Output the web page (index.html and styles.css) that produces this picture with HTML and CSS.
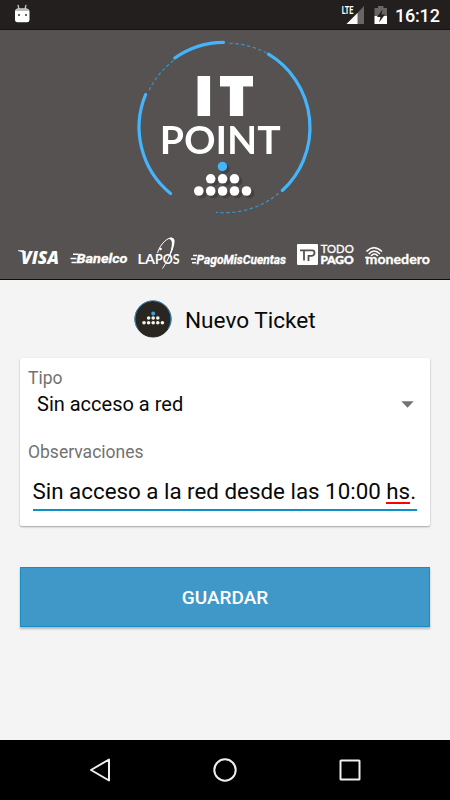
FILE: index.html
```html
<!DOCTYPE html>
<html lang="es">
<head>
<meta charset="utf-8">
<title>Nuevo Ticket</title>
<link rel="stylesheet" href="styles.css">
</head>
<body>
<header class="status">
  <svg class="droid" width="16" height="20" viewBox="0 0 16 20"><path d="M4 .800 5.200 6M12 .800 10.800 6" stroke="#bbb" stroke-width="1.400"/><path d="M1 8Q1 4.500 4 4.500H12Q15.500 4.500 15.500 8V16Q15.500 18.300 13 18.300H3.500Q1 18.300 1 16Z" fill="#fff"/><path d="M1.500 7Q2 4.500 4 4.500H12Q14.500 4.500 15 7Z" fill="#bbb"/><path d="M4 10h2v2H4zM11 10h2v2h-2z" fill="#666"/></svg>
  <svg class="signal" width="24" height="20" viewBox="341 5 24 20"><path d="M347 24 364 6V24Z" fill="#686564"/><path d="M340.500 4H354.500V15.500L347 20H340.500Z" fill="#221f1e"/><path d="M346.500 24 357.500 13V24Z" fill="#fff"/><text x="341.700" y="14" class="lte" textLength="11.800" lengthAdjust="spacingAndGlyphs">LTE</text></svg>
  <svg class="battery" width="14" height="20" viewBox="374 5 14 20"><path d="M374.500 8H378V6H383.500V8H387V16H374.500Z" fill="#686564"/><path d="M374.500 16H387V24H374.500Z" fill="#fff"/><path d="M382.500 9.500 377 17H380.500L379 22.500 385 14.500H381.500Z" fill="#221f1e"/></svg>
  <time class="clock">16:12</time>
</header>
<section class="hero">
  <svg class="logo" width="190" height="190" viewBox="130 30 190 190">
    <g fill="none" stroke="#45b5fb" stroke-width="3.200" stroke-linecap="round">
      <path d="M223.500 42.300A85.500 85.500 0 0 0 174.800 58"/>
      <path d="M145.600 94.600A85.500 85.500 0 0 0 170.500 193.500"/>
      <path d="M268.500 54.200A85.500 85.500 0 0 1 282.300 190.500"/>
    </g>
    <g fill="none" stroke="#3b93c8" stroke-width="1.200" stroke-dasharray="3.400 2.500">
      <path d="M173.500 60.500A85 85 0 0 0 149 90.500"/>
      <path d="M229.500 43.300A85 85 0 0 1 267.500 53.500"/>
      <path d="M278.500 193.500A85 85 0 0 1 216 212.300"/>
    </g>
    <g class="it"><text x="194.400" y="114.700">I</text><text x="219.700" y="114.700" textLength="33.500" lengthAdjust="spacingAndGlyphs">T</text></g>
    <text class="point" x="159.700" y="154.300" textLength="121" lengthAdjust="spacingAndGlyphs">POINT</text>
    <g fill="#454140"><circle cx="225" cy="169" r="4.700"/><circle cx="213.500" cy="181" r="4.900"/><circle cx="225.500" cy="181" r="4.900"/><circle cx="237.500" cy="181" r="4.900"/><circle cx="201.500" cy="193.500" r="4.900"/><circle cx="213.500" cy="193.500" r="4.900"/><circle cx="225.500" cy="193.500" r="4.900"/><circle cx="237.500" cy="193.500" r="4.900"/><circle cx="249.500" cy="193.500" r="4.900"/></g>
    <circle cx="222.400" cy="166.500" r="4.700" fill="#45b5fb"/>
    <g fill="#fff"><circle cx="210.700" cy="178.800" r="4.800"/><circle cx="222.600" cy="178.800" r="4.800"/><circle cx="234.500" cy="178.800" r="4.800"/><circle cx="198.800" cy="191" r="4.800"/><circle cx="210.700" cy="191" r="4.800"/><circle cx="222.600" cy="191" r="4.800"/><circle cx="234.500" cy="191" r="4.800"/><circle cx="246.500" cy="191" r="4.800"/></g>
  </svg>
  <div class="partners">
    <svg width="65" height="50" viewBox="0 230 65 50"><path d="M18 250.300H24L25.500 254Q22 251.500 18 251Z" fill="#fff"/><text class="visa" x="21" y="263.500" textLength="38" lengthAdjust="spacingAndGlyphs">VISA</text></svg>
    <svg width="68" height="50" viewBox="65 230 68 50"><path d="M73 254.200h5M70.500 258.500h6M71.500 262.500h5" stroke="#fff" stroke-width="1.500"/><text class="brand" x="76.500" y="263.300" textLength="51" lengthAdjust="spacingAndGlyphs">Banelco</text></svg>
    <svg width="52" height="50" viewBox="133 230 52 50"><text class="lapos" y="263.500"><tspan x="137.500" textLength="17.500" lengthAdjust="spacingAndGlyphs">LA</tspan><tspan x="155" textLength="24.500" lengthAdjust="spacingAndGlyphs">POS</tspan></text><path d="M157.500 253C160 244 168 237 172 238C176 240 171 256 162.500 268.500" fill="none" stroke="#fff" stroke-width="1"/><path d="M168 239Q173 236 174.500 240Q175 248 167 261Q172.500 248 171.800 242Q171 238.500 168 239Z" fill="#fff"/><circle cx="160.500" cy="249" r="1.300" fill="#fff"/></svg>
    <svg width="105" height="50" viewBox="185 230 105 50"><path d="M193 255.500h4M191 259h5M192 262.700h4" stroke="#fff" stroke-width="1.400"/><text class="brand pago" x="196.500" y="263.500" textLength="89.500" lengthAdjust="spacingAndGlyphs">PagoMisCuentas</text></svg>
    <svg width="70" height="50" viewBox="290 230 70 50"><rect x="297" y="244" width="21" height="21" rx="1" fill="#fff"/><path d="M300 250.300H312.500Q314.500 250.300 314.500 252.800T312 255.800H308.500V261M304 251V260.500" fill="none" stroke="#565251" stroke-width="1.800"/><text class="todo" x="320.700" y="253.200" textLength="33" lengthAdjust="spacingAndGlyphs">TODO</text><text class="pagob" x="320.500" y="264" textLength="33" lengthAdjust="spacingAndGlyphs">PAGO</text></svg>
    <svg width="90" height="50" viewBox="360 230 90 50"><g fill="none" stroke="#fff" stroke-width="1.500"><path d="M366.500 251.500Q374 244 382 251.500"/><path d="M368.700 254Q374 248 380 254"/><path d="M371 256Q374.300 252 378 256"/></g><path d="M365 257.500H369" stroke="#fff" stroke-width="1.500"/><text class="mone" x="365.500" y="263.500" textLength="64.500" lengthAdjust="spacingAndGlyphs">monedero</text></svg>
  </div>
</section>
<main class="content">
  <div class="heading">
    <svg width="38" height="38" viewBox="0 0 38 38"><circle cx="19" cy="19" r="18" fill="#292622" stroke="#292622"/><path d="M4.200 29.500A18.200 18.200 0 0 1 17 1M20 .900A18.200 18.200 0 0 1 34 29" fill="none" stroke="#2b91c8" stroke-width="1"/><circle cx="19.200" cy="13.500" r="1.900" fill="#3ba4e4"/><g fill="#f5f5ed"><circle cx="14.600" cy="18" r="1.800"/><circle cx="19.200" cy="18" r="1.800"/><circle cx="23.800" cy="18" r="1.800"/><circle cx="10" cy="22.700" r="1.800"/><circle cx="14.600" cy="22.700" r="1.800"/><circle cx="19.200" cy="22.700" r="1.800"/><circle cx="23.800" cy="22.700" r="1.800"/><circle cx="28.400" cy="22.700" r="1.800"/></g></svg>
    <h1>Nuevo Ticket</h1>
  </div>
  <section class="card">
    <div class="label">Tipo</div>
    <div class="select"><span>Sin acceso a red</span><svg width="13" height="7" viewBox="0 0 13 7"><path d="M.300 .300H12.700L6.500 6.700Z" fill="#737373"/></svg></div>
    <div class="label obs">Observaciones</div>
    <div class="input">Sin acceso a la red desde las 10:00 <span class="typo">hs</span>.</div>
  </section>
  <button class="save">GUARDAR</button>
</main>
<nav class="nav">
  <svg width="24" height="28" viewBox="0 0 24 28"><path d="M21 3.500V24.500L3 14Z" class="nav-icon"/></svg>
  <svg width="26" height="28" viewBox="0 0 26 28"><circle cx="13" cy="14" r="10.700" class="nav-icon"/></svg>
  <svg width="24" height="28" viewBox="0 0 24 28"><rect x="2.500" y="4.500" width="19" height="19" rx=".5" class="nav-icon"/></svg>
</nav>
</body>
</html>
```
FILE: styles.css
```css
* { box-sizing: border-box; }
body { margin: 0; width: 450px; height: 800px; overflow: hidden; display: flex; flex-direction: column; background: #f4f4f4; font-family: Roboto, "Noto Sans", sans-serif; color: #080808; }
svg { display: block; flex: none; overflow: visible; }
.status { height: 30px; flex: none; display: flex; background: #221f1e; border-bottom: 1px solid #171312; color: #fff; }
.droid { margin: 4px 0 0 14px; }
.signal { margin: 5px 0 0 311px; }
.battery { margin: 5px 0 0 9px; }
.clock { margin: 5px 0 0 7px; font-size: 18px; line-height: 22px; font-weight: 500; letter-spacing: -.2px; white-space: nowrap; }
.lte { font: 700 11px Roboto, sans-serif; fill: #fff; }
.hero { height: 250px; flex: none; background: #565251; border-bottom: 1px solid #1d0708; }
.logo { margin: 0 0 10px 130px; }
.it { font: 800 53.5px "Open Sans", sans-serif; fill: #fff; stroke: #fff; stroke-width: 2.2px; filter: drop-shadow(0 .7px 0 #171514); }
.point { font: 700 39px Lato, sans-serif; fill: #fff; filter: drop-shadow(0 .7px 0 #171514); }
.partners { display: flex; }
.partners text { fill: #fff; }
.visa { font: italic 800 18px "Open Sans", sans-serif; }
.brand { font: italic 700 13px Roboto, sans-serif; stroke: #fff; stroke-width: .3px; }
.pago { font-size: 12.5px; }
.lapos { font: 700 12.5px Lato, sans-serif; }
.todo { font: 400 12px Lato, sans-serif; stroke: #fff; stroke-width: .3px; }
.partners .pagob { font: 700 12px Lato, sans-serif; stroke: #fff; stroke-width: .6px; }
.mone { font: 700 14px Lato, sans-serif; stroke: #fff; stroke-width: .3px; }
.content { height: 460px; flex: none; padding: 0 20px; }
.heading { display: flex; align-items: center; padding: 20px 0 0 114px; height: 58px; }
.heading h1 { margin: 3px 0 0 13px; font-size: 22.6px; line-height: 30px; font-weight: 400; white-space: nowrap; }
.card { height: 168px; margin-top: 20px; padding: 9px 8px 0; background: #fff; border-radius: 2px; box-shadow: 0 1px 2px rgba(0,0,0,.34); }
.label { font-size: 17.5px; line-height: 22px; color: #727272; }
.select { display: flex; justify-content: space-between; align-items: center; height: 30px; padding: 0 8px 0 9px; font-size: 20px; }
.obs { margin-top: 22px; }
.input { margin: 15px 5px 0 4.5px; height: 33px; border-bottom: 2px solid #118fc8; font-size: 22.35px; line-height: 27px; white-space: nowrap; }
.typo { display: inline-block; height: 26px; border-bottom: 2px solid #f00; vertical-align: top; }
.save { display: block; width: 410px; height: 60px; margin: 41px 0 0; padding: 1px 0 0; border: 1px solid #168dc4; border-radius: 0; background: #4098c9; box-shadow: 0 2px 2px rgba(0,0,0,.25); color: #fff; font: 500 19px Roboto, sans-serif; }
.nav { height: 60px; flex: none; display: flex; justify-content: space-between; align-items: center; padding: 0 88px; background: #000; }
.nav-icon { fill: none; stroke: #eee; stroke-width: 2; stroke-linejoin: round; }
```
